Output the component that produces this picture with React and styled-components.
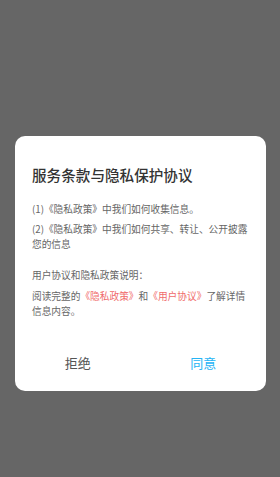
import styled, { createGlobalStyle } from "styled-components";

const GlobalStyle = createGlobalStyle`
  html, body {
    margin: 0;
    padding: 0;
    background: #666666;
  }
  body {
    font-family: "Noto Sans CJK SC", "Noto Sans", sans-serif;
  }
`;

const Overlay = styled.div`
  height: 477px;
  background: #666666;
  padding-top: 136px;
  box-sizing: border-box;
`;

const Dialog = styled.div`
  width: 251px;
  margin: 0 0 0 15px;
  background: #ffffff;
  border-radius: 10px;
  padding-top: 28px;
  display: flex;
  flex-direction: column;
`;

const Title = styled.h2`
  margin: 0 17px;
  font-size: 14.6px;
  line-height: 21px;
  font-weight: 500;
  color: #333333;
`;

const Section = styled.div`
  margin: ${(p) => p.$top}px 17px 0;
  display: flex;
  flex-direction: column;
  gap: ${(p) => p.$gap}px;
`;

const Para = styled.p`
  margin: 0;
  font-size: 9.7px;
  line-height: 15px;
  color: #666666;
  white-space: nowrap;
`;

const Link = styled.span`
  color: #f06b6b;
`;

const Buttons = styled.div`
  display: flex;
  height: 56px;
  margin-top: 15.5px;
`;

const Button = styled.button`
  flex: 1;
  border: none;
  background: none;
  font-family: inherit;
  font-size: 13px;
  color: ${(p) => (p.$primary ? "#25b4f5" : "#555555")};
  padding: 0;
`;

export default function App() {
  return (
    <>
      <GlobalStyle />
      <Overlay>
        <Dialog>
          <Title>服务条款与隐私保护协议</Title>
          <Section $top={17} $gap={5}>
            <Para>(1)《隐私政策》中我们如何收集信息。</Para>
            <Para>
              (2)《隐私政策》中我们如何共享、转让、公开披露
              <br />
              您的信息
            </Para>
          </Section>
          <Section $top={16} $gap={6}>
            <Para>用户协议和隐私政策说明：</Para>
            <Para>
              阅读完整的<Link>《隐私政策》</Link>和<Link>《用户协议》</Link>了解详情
              <br />
              信息内容。
            </Para>
          </Section>
          <Buttons>
            <Button>拒绝</Button>
            <Button $primary>同意</Button>
          </Buttons>
        </Dialog>
      </Overlay>
    </>
  );
}
